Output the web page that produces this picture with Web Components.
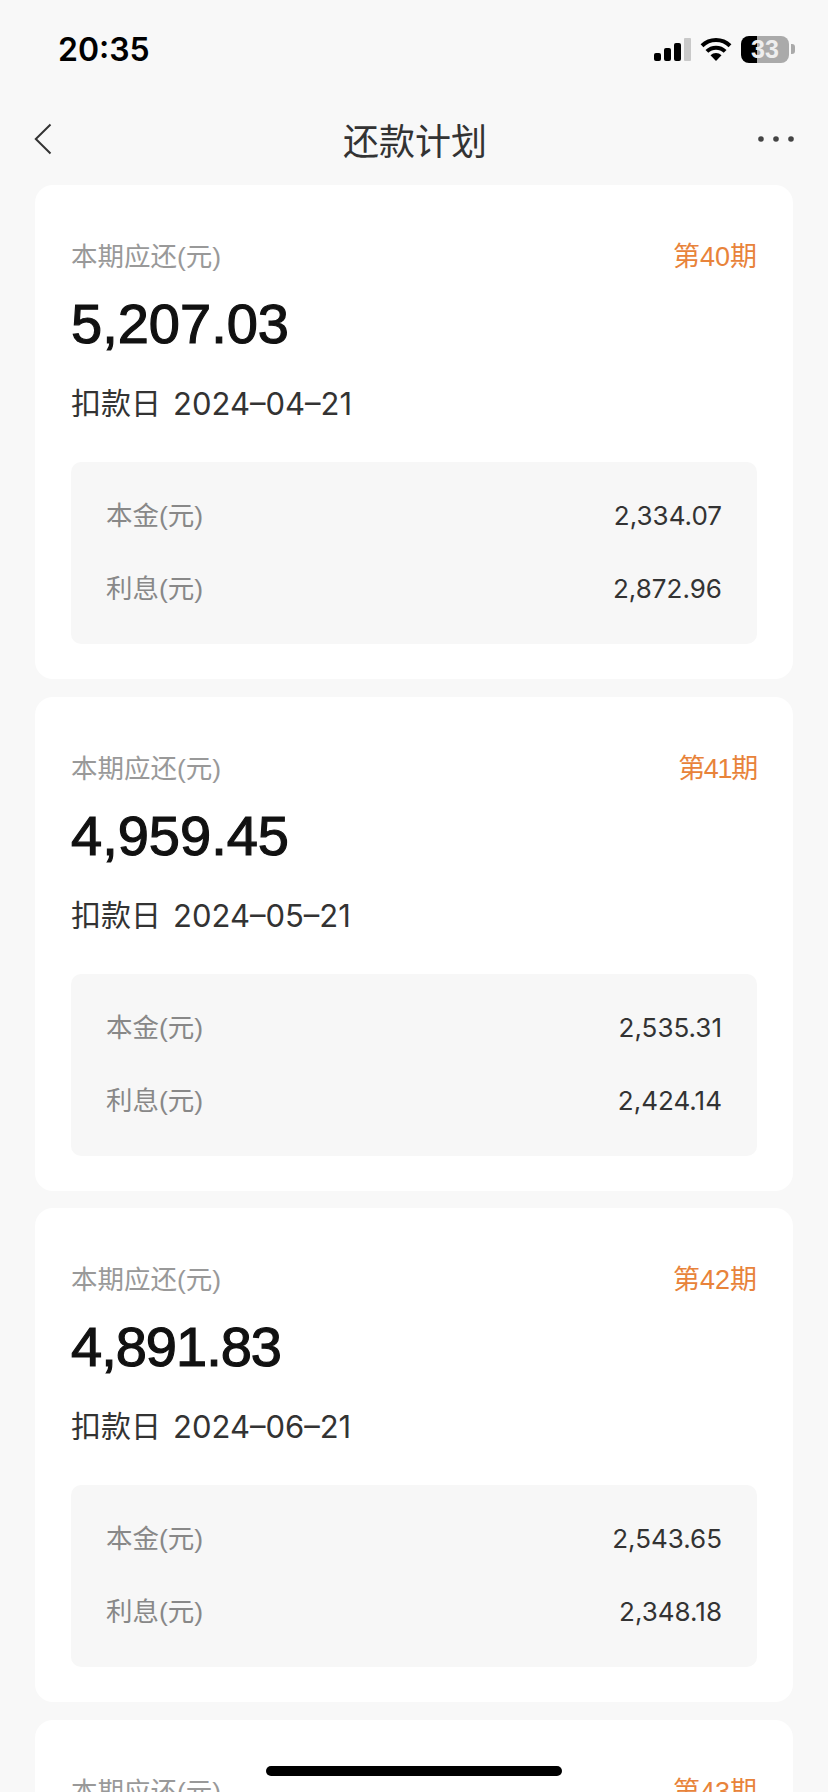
<!DOCTYPE html>
<html lang="zh">
<head>
<meta charset="utf-8">
<title>还款计划</title>
<style>
    html, body {
        margin: 0;
        height: 1792px;
        overflow: hidden;
        background: #f8f8f8;
        font-family: "Liberation Sans", "Noto Sans CJK SC", sans-serif;
    }
</style>
</head>
<body>
<app-shell>
    <status-bar time="20:35" battery="33"></status-bar>
    <nav-bar title="还款计划"></nav-bar>
    <plan-list>
        <plan-card period="第40期" amount="5,207.03" date="2024–04–21" principal="2,334.07" interest="2,872.96"></plan-card>
        <plan-card period="第41期" amount="4,959.45" date="2024–05–21" principal="2,535.31" interest="2,424.14"></plan-card>
        <plan-card period="第42期" amount="4,891.83" date="2024–06–21" principal="2,543.65" interest="2,348.18"></plan-card>
        <plan-card period="第43期"></plan-card>
    </plan-list>
    <home-indicator></home-indicator>
</app-shell>

<script>
const shellTemplate = document.createElement("template");
shellTemplate.innerHTML = `
    <style>
        :host {
            display: block;
            position: relative;
            width: 828px;
            height: 1792px;
            overflow: hidden;
        }
    </style>
    <slot></slot>
`;

class AppShell extends HTMLElement {
    constructor() {
        super();
        this.attachShadow({ mode: 'open' });
        this.shadowRoot.appendChild(shellTemplate.content.cloneNode(true));
    }
}

const statusTemplate = document.createElement("template");
statusTemplate.innerHTML = `
    <style>
        :host {
            display: flex;
            align-items: center;
            justify-content: space-between;
            height: 98px;
            padding: 0 33px 0 58px;
            box-sizing: border-box;
        }
        .time {
            font-family: Inter, "Liberation Sans", sans-serif;
            font-size: 32px;
            font-weight: 600;
            color: #000;
        }
        .icons {
            display: flex;
            align-items: center;
            gap: 9px;
        }
        svg { display: block; }
        .battery {
            position: relative;
            width: 48px;
            height: 27px;
            border-radius: 8px;
            overflow: hidden;
            background: linear-gradient(to right, #000 33%, #aaa 33%);
            color: #eee;
            font-size: 25px;
            font-weight: bold;
            line-height: 27px;
            text-align: center;
        }
        .nib {
            width: 4px;
            height: 10px;
            margin-left: -7px;
            background: #aaa;
            border-radius: 0 3px 3px 0;
        }
    </style>
    <span class="time"></span>
    <div class="icons">
        <svg width="37" height="23" viewBox="0 0 37 23">
            <rect x="0" y="15" width="7" height="8" rx="2"/>
            <rect x="10" y="10" width="7" height="13" rx="2"/>
            <rect x="20" y="5" width="7" height="18" rx="2"/>
            <rect x="30" y="0" width="7" height="23" rx="1" fill="#c9c9c9"/>
        </svg>
        <svg width="32" height="24" viewBox="0 0 32 24">
            <path d="M16 24 L10.5 18.2 A8 8 0 0 1 21.5 18.2 Z"/>
            <path d="M6.9 14.4 A13 13 0 0 1 25.1 14.4" fill="none" stroke="#000" stroke-width="4"/>
            <path d="M2 8.8 A20 20 0 0 1 30 8.8" fill="none" stroke="#000" stroke-width="4"/>
        </svg>
        <div class="battery"></div>
        <div class="nib"></div>
    </div>
`;

class StatusBar extends HTMLElement {
    constructor() {
        super();
        this.attachShadow({ mode: 'open' });
        this.shadowRoot.appendChild(statusTemplate.content.cloneNode(true));
    }

    connectedCallback() {
        this.shadowRoot.querySelector(".time").textContent = this.getAttribute("time");
        this.shadowRoot.querySelector(".battery").textContent = this.getAttribute("battery");
    }
}

const navTemplate = document.createElement("template");
navTemplate.innerHTML = `
    <style>
        :host {
            display: grid;
            grid-template-columns: 1fr auto 1fr;
            align-items: center;
            height: 87px;
            padding: 0 34px 5px 36px;
            box-sizing: border-box;
        }
        .title {
            font-size: 36px;
            color: #333;
        }
        svg { display: block; }
        .back { margin-left: -2px; }
        .more { justify-self: end; }
    </style>
    <svg class="back" width="18" height="32" viewBox="0 0 18 32">
        <path d="M16.5 1.5 L1.8 16 L16.5 30.5" fill="none" stroke="#333" stroke-width="2"/>
    </svg>
    <span class="title"></span>
    <svg class="more" width="36" height="6" viewBox="0 0 36 6" fill="#444">
        <circle cx="3" cy="3" r="2.8"/>
        <circle cx="18" cy="3" r="2.8"/>
        <circle cx="33" cy="3" r="2.8"/>
    </svg>
`;

class NavBar extends HTMLElement {
    constructor() {
        super();
        this.attachShadow({ mode: 'open' });
        this.shadowRoot.appendChild(navTemplate.content.cloneNode(true));
    }

    connectedCallback() {
        this.shadowRoot.querySelector(".title").textContent = this.getAttribute("title");
    }
}

const listTemplate = document.createElement("template");
listTemplate.innerHTML = `
    <style>
        :host {
            display: flex;
            flex-direction: column;
            gap: 17.7px;
            padding: 0 35px;
        }
    </style>
    <slot></slot>
`;

class PlanList extends HTMLElement {
    constructor() {
        super();
        this.attachShadow({ mode: 'open' });
        this.shadowRoot.appendChild(listTemplate.content.cloneNode(true));
    }
}

const cardTemplate = document.createElement("template");
cardTemplate.innerHTML = `
    <style>
        :host {
            display: block;
            background: #fff;
            border-radius: 18px;
            padding: 54px 36px 35px;
        }
        .head {
            display: flex;
            justify-content: space-between;
            font-size: 26.5px;
            line-height: 36px;
            color: #999;
        }
        .period {
            font-size: 27px;
            color: #e8833a;
        }
        .period.has-one { letter-spacing: -1.3px; }
        .amount {
            margin-top: 17px;
            font-size: 56px;
            line-height: 64px;
            -webkit-text-stroke: 1.2px #111;
            color: #111;
        }
        .amount.has-one { letter-spacing: -1px; }
        .date {
            display: flex;
            gap: 12px;
            margin-top: 28px;
            font-size: 30px;
            line-height: 40px;
            color: #333;
        }
        .date b {
            font-family: Inter, "Liberation Sans", sans-serif;
            font-weight: 400;
            font-size: 31px;
        }
        .detail {
            display: flex;
            flex-direction: column;
            gap: 37px;
            margin-top: 38px;
            padding: 36px 35px 37px;
            background: #f7f7f7;
            border-radius: 10px;
            font-size: 26.5px;
            line-height: 36px;
        }
        .row {
            display: flex;
            justify-content: space-between;
            color: #888;
        }
        .row b {
            font-family: Inter, "Liberation Sans", sans-serif;
            font-weight: 400;
            font-size: 26px;
            color: #333;
        }
    </style>
    <div class="head">
        <span>本期应还(元)</span>
        <span class="period"></span>
    </div>
    <div class="amount"></div>
    <div class="date"><span>扣款日</span><b class="due"></b></div>
    <div class="detail">
        <div class="row"><span>本金(元)</span><b class="principal"></b></div>
        <div class="row"><span>利息(元)</span><b class="interest"></b></div>
    </div>
`;

class PlanCard extends HTMLElement {
    constructor() {
        super();
        this.attachShadow({ mode: 'open' });
        this.shadowRoot.appendChild(cardTemplate.content.cloneNode(true));
    }

    // Liberation's digits are all one width, the reference has a narrow 1
    setNumber(selector, text) {
        const el = this.shadowRoot.querySelector(selector);
        el.textContent = text;
        el.classList.toggle("has-one", text.includes("1"));
    }

    connectedCallback() {
        const root = this.shadowRoot;
        this.setNumber(".period", this.getAttribute("period"));
        // the last card is cut off by the screen, only its header shows
        if (!this.hasAttribute("amount")) {
            root.querySelector(".amount").remove();
            root.querySelector(".date").remove();
            root.querySelector(".detail").remove();
            return;
        }
        this.setNumber(".amount", this.getAttribute("amount"));
        root.querySelector(".due").textContent = this.getAttribute("date");
        root.querySelector(".principal").textContent = this.getAttribute("principal");
        root.querySelector(".interest").textContent = this.getAttribute("interest");
    }
}

const homeTemplate = document.createElement("template");
homeTemplate.innerHTML = `
    <style>
        :host {
            position: absolute;
            left: 266px;
            top: 1766px;
            width: 296px;
            height: 10px;
            background: #000;
            border-radius: 5px;
        }
    </style>
`;

class HomeIndicator extends HTMLElement {
    constructor() {
        super();
        this.attachShadow({ mode: 'open' });
        this.shadowRoot.appendChild(homeTemplate.content.cloneNode(true));
    }
}

window.customElements.define('app-shell', AppShell);
window.customElements.define('status-bar', StatusBar);
window.customElements.define('nav-bar', NavBar);
window.customElements.define('plan-list', PlanList);
window.customElements.define('plan-card', PlanCard);
window.customElements.define('home-indicator', HomeIndicator);
</script>
</body>
</html>
